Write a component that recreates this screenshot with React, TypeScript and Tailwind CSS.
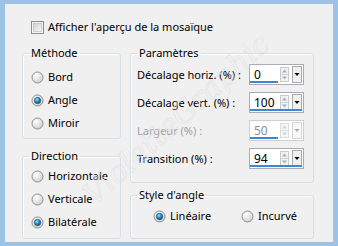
import React from 'react'

function Radio({ checked }: { checked?: boolean }) {
  return (
    <svg width="13" height="13" viewBox="0 0 13 13" className="shrink-0">
      <circle cx="6.5" cy="6.5" r="5.5" fill="url(#radioBg)" stroke="#8e8f8f" strokeWidth="1" />
      {checked && <circle cx="6.5" cy="6.5" r="3.2" fill="url(#radioDot)" stroke="#1d4f73" strokeWidth="0.6" />}
    </svg>
  )
}

function Checkbox() {
  return (
    <svg width="13" height="13" viewBox="0 0 13 13" className="shrink-0">
      <rect x="0.5" y="0.5" width="12" height="12" fill="#f4f4f4" stroke="#8e8f8f" />
      <rect x="2.5" y="2.5" width="8" height="8" fill="url(#checkBg)" stroke="#b9b9b9" strokeWidth="0.6" />
    </svg>
  )
}

function SpinField({ value, full, disabled }: { value: string; full?: boolean; disabled?: boolean }) {
  return (
    <div
      className={`relative flex h-[21px] w-[55px] shrink-0 items-center border bg-white ${
        disabled ? 'border-[#cfcfcf]' : 'border-[#abadb3]'
      }`}
    >
      <span className={`flex-1 pl-[4px] text-[12px] leading-none ${disabled ? 'text-[#8d8d8d]' : 'text-[#000]'}`}>
        {value}
      </span>
      <svg width="9" height="15" viewBox="0 0 9 15" className="mr-[3px] shrink-0">
        <rect x="0.5" y="0.5" width="8" height="14" fill={disabled ? '#f7f7f7' : '#f2f2f2'} stroke={disabled ? '#dcdcdc' : '#c9c9c9'} />
        <line x1="1" y1="7.5" x2="8" y2="7.5" stroke={disabled ? '#e0e0e0' : '#cfcfcf'} />
        <path d="M4.5 2.5 L7 5.5 L2 5.5 Z" fill={disabled ? '#cdd6de' : '#9fb2c4'} />
        <path d="M4.5 12.5 L7 9.5 L2 9.5 Z" fill={disabled ? '#cdd6de' : '#9fb2c4'} />
      </svg>
      <svg width="10" height="17" viewBox="0 0 10 17" className="mr-[1px] shrink-0">
        <rect x="0.5" y="0.5" width="9" height="16" fill={disabled ? '#f8f8f8' : '#f0f0f0'} stroke={disabled ? '#d6d6d6' : '#adadad'} />
        <path d="M2.5 7 L7.5 7 L5 10 Z" fill={disabled ? '#a8a8a8' : '#000'} />
      </svg>
      <div className={`absolute bottom-[1px] left-0 h-[2px] bg-[#3b87d4] ${full ? 'w-[52px]' : 'w-[28px]'}`} />
    </div>
  )
}

function Group({ title, className, children }: { title: string; className: string; children: React.ReactNode }) {
  return (
    <fieldset className={`rounded-[3px] border border-[#d5dfe5] shadow-[inset_1px_1px_0_#ffffff] ${className}`}>
      <legend className="ml-[6px] px-[2px] leading-[16px] text-[#000]">{title}</legend>
      {children}
    </fieldset>
  )
}

function ParamRow({ label, value, full, disabled }: { label: string; value: string; full?: boolean; disabled?: boolean }) {
  return (
    <div className="flex h-[21px] items-center justify-between">
      <span className={`whitespace-nowrap ${disabled ? 'text-[#a0a0a0]' : 'text-[#000]'}`}>{label}</span>
      <SpinField value={value} full={full} disabled={disabled} />
    </div>
  )
}

export default function App() {
  return (
    <div className="relative h-[246px] w-[338px] overflow-hidden border-x-[5px] border-y-[4px] border-[#9cc2e5] bg-[#f0f0f0] font-['Noto_Sans','Open_Sans',sans-serif] text-[11px] leading-[16px] text-black">
      <svg width="0" height="0" className="absolute">
        <defs>
          <radialGradient id="radioBg" cx="0.35" cy="0.3" r="0.75">
            <stop offset="0" stopColor="#ffffff" />
            <stop offset="1" stopColor="#cfcfcf" />
          </radialGradient>
          <radialGradient id="radioDot" cx="0.4" cy="0.35" r="0.7">
            <stop offset="0" stopColor="#8fe6ff" />
            <stop offset="0.5" stopColor="#2a8cc4" />
            <stop offset="1" stopColor="#0a4a78" />
          </radialGradient>
          <linearGradient id="checkBg" x1="0" y1="0" x2="1" y2="1">
            <stop offset="0" stopColor="#cfcfcf" />
            <stop offset="1" stopColor="#f7f7f7" />
          </linearGradient>
        </defs>
      </svg>

      <div className="flex flex-col px-[17px] pt-[15px]">
        <label className="ml-[9px] flex h-[16px] items-center gap-[4px]">
          <Checkbox />
          <span>Afficher l'aperçu de la mosaïque</span>
        </label>

        <div className="mt-[10px] flex gap-[9px]">
          <div className="flex w-[99px] flex-col gap-[9px]">
            <Group title="Méthode" className="h-[94px]">
              <div className="flex flex-col gap-[7px] pl-[8px] pt-[8px]">
                <div className="flex items-center gap-[4px]"><Radio />Bord</div>
                <div className="flex items-center gap-[4px]"><Radio checked />Angle</div>
                <div className="flex items-center gap-[4px]"><Radio />Miroir</div>
              </div>
            </Group>
            <Group title="Direction" className="h-[91px]">
              <div className="flex flex-col gap-[7px] pl-[8px] pt-[4px]">
                <div className="flex items-center gap-[4px]"><Radio />Horizontale</div>
                <div className="flex items-center gap-[4px]"><Radio />Verticale</div>
                <div className="flex items-center gap-[4px]"><Radio checked />Bilatérale</div>
              </div>
            </Group>
          </div>

          <div className="flex w-[184px] flex-col gap-[4px]">
            <Group title="Paramètres" className="h-[138px]">
              <div className="flex flex-col gap-[7px] pl-[6px] pr-[9px] pt-[3px]">
                <ParamRow label="Décalage horiz. (%) :" value="0" />
                <ParamRow label="Décalage vert. (%) :" value="100" full />
                <ParamRow label="Largeur (%) :" value="50" disabled />
                <ParamRow label="Transition (%) :" value="94" full />
              </div>
            </Group>
            <Group title="Style d'angle" className="h-[52px]">
              <div className="flex items-center pl-[22px] pt-[5px]">
                <div className="flex w-[88px] items-center gap-[4px]"><Radio checked />Linéaire</div>
                <div className="flex items-center gap-[4px]"><Radio />Incurvé</div>
              </div>
            </Group>
          </div>
        </div>
      </div>

      <div className="pointer-events-none absolute left-[52px] top-[100px] -rotate-[42deg] font-['DejaVu_Serif',serif] text-[30px] italic leading-none text-transparent [-webkit-text-stroke:0.5px_#e0e0e0]">
        VioletteGraphic
      </div>
    </div>
  )
}
